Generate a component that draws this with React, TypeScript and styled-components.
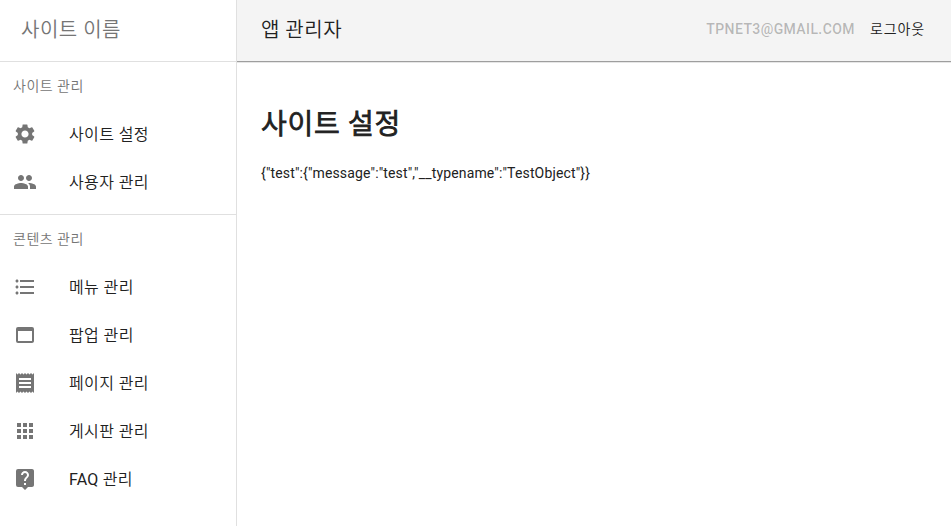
import React from "react";
import styled, { createGlobalStyle } from "styled-components";
import { MdSettings, MdPeople, MdFormatListBulleted, MdWebAsset, MdReceipt, MdApps, MdLiveHelp } from "react-icons/md";
import type { IconType } from "react-icons";

const GlobalStyle = createGlobalStyle`
  * { box-sizing: border-box; }
  body {
    margin: 0;
    background: #fff;
    color: #212121;
    font-family: Roboto, "Noto Sans CJK KR DemiLight", "Noto Sans CJK KR Light", "Noto Sans CJK KR", sans-serif;
    overflow: hidden;
  }
`;

const Layout = styled.div`
  display: grid;
  grid-template-columns: 237px 1fr;
  height: 100vh;
`;

const Sidebar = styled.nav`
  border-right: 1px solid #e0e0e0;
`;

const SiteName = styled.div`
  display: flex;
  align-items: center;
  height: 61px;
  padding: 0 21px 4px;
  font-size: 20px;
  letter-spacing: 0.5px;
  color: #757575;
`;

const Section = styled.section`
  height: 153px;
  border-top: 1px solid #e0e0e0;
`;

const SectionTitle = styled.h2`
  margin: 0;
  padding-left: 13px;
  font-size: 14px;
  font-weight: 400;
  letter-spacing: 0.5px;
  line-height: 48px;
  color: #757575;
`;

const Item = styled.a`
  display: flex;
  align-items: center;
  height: 48px;
  padding-left: 13px;
  gap: 32px;
  font-size: 16px;
  svg { width: 24px; height: 24px; color: #757575; }
`;

const ItemLabel = styled.span`
  padding-bottom: 2px;
  letter-spacing: 0.4px;
`;

const Latin = styled.span`
  letter-spacing: 0.15px;
`;

const Main = styled.main`
  min-width: 0;
`;

const AppBar = styled.header`
  display: flex;
  align-items: center;
  height: 61px;
  padding: 0 26px 3px 24px;
  background: #f4f4f4;
  box-shadow: 0 1px 0 #9e9e9e, 0 2px 0 #e6e6e6;
`;

const AppTitle = styled.div`
  flex: 1;
  padding-bottom: 1px;
  font-size: 20px;
  letter-spacing: 0.5px;
`;

const Account = styled.span`
  margin-right: 15px;
  font-size: 14px;
  font-weight: 500;
  letter-spacing: 0.4px;
  color: rgba(0, 0, 0, 0.26);
`;

const Logout = styled.span`
  padding-bottom: 3px;
  font-size: 14px;
  letter-spacing: 0.9px;
`;

const Content = styled.div`
  padding: 43px 24px;
`;

const Heading = styled.h1`
  margin: 0;
  font-size: 28px;
  line-height: 42px;
  font-weight: 400;
  letter-spacing: 0.7px;
  -webkit-text-stroke: 0.9px currentColor;
`;

const Result = styled.p`
  margin: 17px 0 0;
  font-size: 14px;
  line-height: 20px;
  letter-spacing: 0.01071em;
`;

type Entry = { icon: IconType; latin?: string; label: string };

const sections: { title: string; items: Entry[] }[] = [
  { title: "사이트 관리", items: [
    { icon: MdSettings, label: "사이트 설정" },
    { icon: MdPeople, label: "사용자 관리" },
  ] },
  { title: "콘텐츠 관리", items: [
    { icon: MdFormatListBulleted, label: "메뉴 관리" },
    { icon: MdWebAsset, label: "팝업 관리" },
    { icon: MdReceipt, label: "페이지 관리" },
    { icon: MdApps, label: "게시판 관리" },
    { icon: MdLiveHelp, latin: "FAQ", label: " 관리" },
  ] },
];

export default function App() {
  return (
    <>
      <GlobalStyle />
      <Layout>
        <Sidebar>
          <SiteName>사이트 이름</SiteName>
          {sections.map(({ title, items }) => (
            <Section key={title}>
              <SectionTitle>{title}</SectionTitle>
              {items.map(({ icon: Icon, latin, label }) => (
                <Item key={label}>
                  <Icon />
                  <ItemLabel>{latin && <Latin>{latin}</Latin>}{label}</ItemLabel>
                </Item>
              ))}
            </Section>
          ))}
        </Sidebar>
        <Main>
          <AppBar>
            <AppTitle>앱 관리자</AppTitle>
            <Account>TPNET3@GMAIL.COM</Account>
            <Logout>로그아웃</Logout>
          </AppBar>
          <Content>
            <Heading>사이트 설정</Heading>
            <Result>{JSON.stringify({ test: { message: "test", __typename: "TestObject" } })}</Result>
          </Content>
        </Main>
      </Layout>
    </>
  );
}
